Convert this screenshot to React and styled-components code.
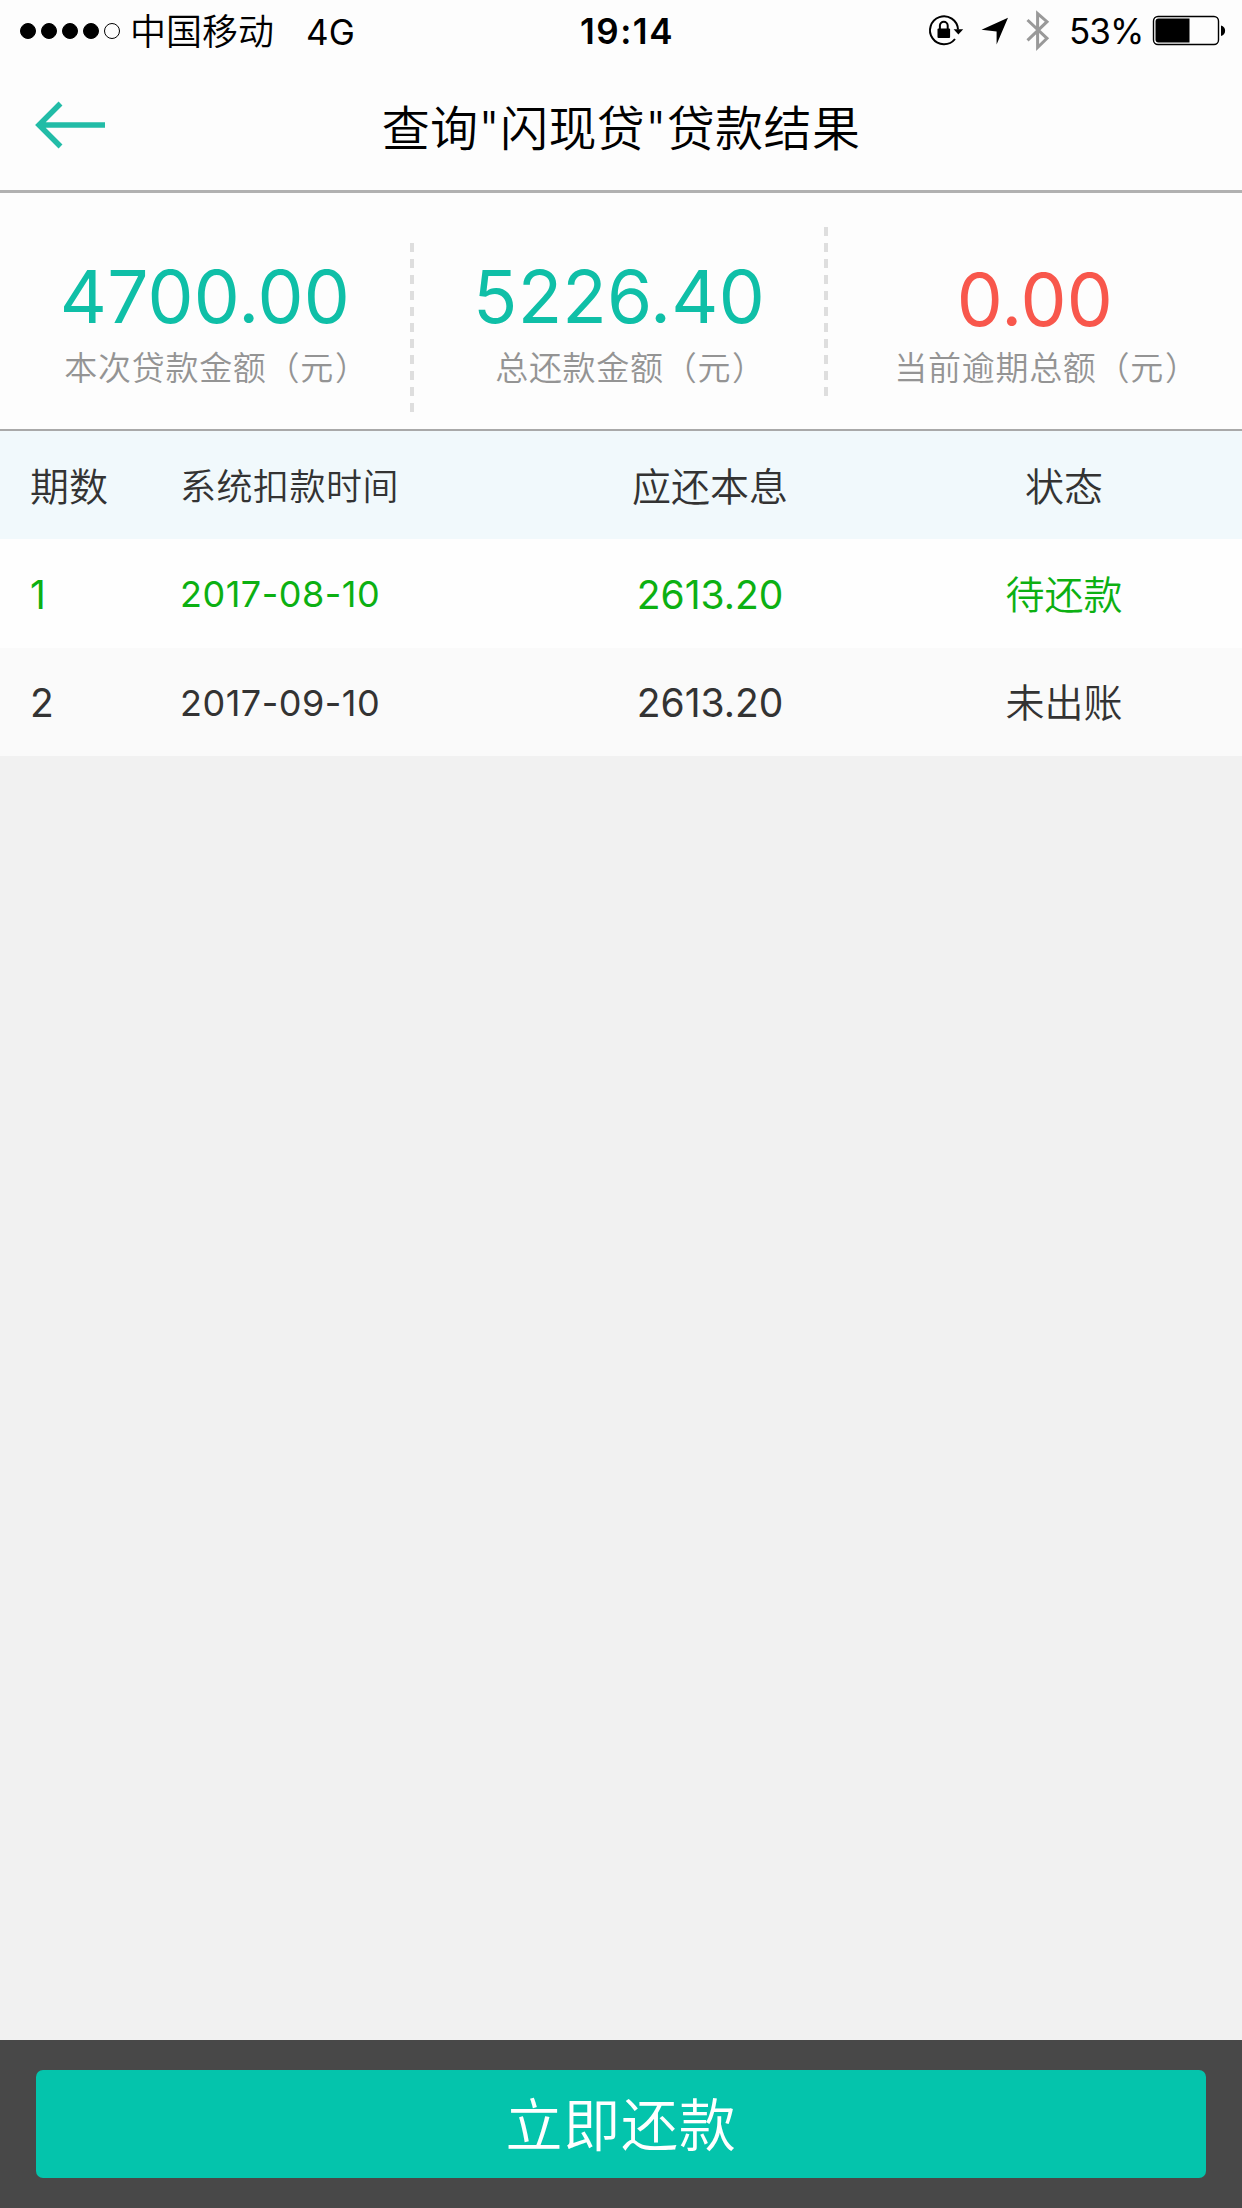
import React from 'react'
import styled, { createGlobalStyle } from 'styled-components';

const GlobalStyle = createGlobalStyle`
  body {
    margin: 0;
    background: #f1f1f1;
    font-family: Inter, "Noto Sans CJK SC", sans-serif;
  }
`;

const Page = styled.div`
  display: flex;
  flex-direction: column;
  width: 1242px;
  height: 2208px;
`;

const StatusBar = styled.div`
  display: grid;
  grid-template-columns: 580px 340px 1fr;
  height: 63px;
  background: #fdfdfd;
  color: #000;
  font-size: 35px;
  line-height: 63px;
  white-space: nowrap;
`;

const Carrier = styled.div`
  display: flex;
  align-items: center;
  padding-left: 20px;
`;

const Dots = styled.div`
  display: flex;
  gap: 5px;
  margin: 0 10px 3px 0;
`;

const Dot = styled.span`
  box-sizing: border-box;
  width: 16px;
  height: 16px;
  border: 1px solid #000;
  border-radius: 50%;
  background: ${props => props.$on ? '#000' : 'transparent'};
`;

const CarrierName = styled.span`
  font-size: 36px;
  font-weight: 350;
  line-height: 64px;
`;

const Network = styled.span`
  margin-left: 32px;
`;

const Clock = styled.div`
  font-size: 35px;
  font-weight: 600;
  letter-spacing: 1.5px;
`;

const StatusIcons = styled.div`
  display: flex;
  align-items: flex-start;
`;

const Percent = styled.span`
  width: 83px;
  letter-spacing: -1px;
`;

const NavBar = styled.div`
  display: grid;
  grid-template-columns: 141px 960px 141px;
  align-items: center;
  height: 127px;
  background: #fdfdfd;
  border-bottom: 3px solid #b1b1b1;
`;

const Back = styled.button`
  height: 127px;
  padding: 0;
  border: 0;
  background: none;
`;

const Title = styled.h1`
  height: 127px;
  margin: 0;
  color: #000;
  font-size: 48px;
  font-weight: 350;
  line-height: 132px;
  letter-spacing: 0.4px;
  text-align: center;
`;

const Summary = styled.div`
  display: grid;
  grid-template-columns: 410px 4px 410px 4px 414px;
  height: 236px;
  background: #fdfdfd;
  border-bottom: 2px solid #a9a9a9;
`;

const Divider = styled.div`
  width: 4px;
  height: 169px;
  margin-top: ${props => props.$top}px;
  background: repeating-linear-gradient(#dedede 0 9px, transparent 9px 16px);
`;

const SummaryItem = styled.div`
  display: flex;
  flex-direction: column;
  align-items: center;
  padding-top: ${props => props.$warn ? 67 : 64}px;
  white-space: nowrap;
`;

const Amount = styled.div`
  height: ${props => props.$warn ? 76 : 79}px;
  color: ${props => props.$warn ? '#f8574c' : '#0fbfa7'};
  font-size: 73px;
  line-height: 80px;
  letter-spacing: 0.2px;
`;

// the closing full-width bracket leaves half an em blank on its right
const Label = styled.div`
  padding-left: 23px;
  color: #949494;
  font-size: 33px;
  font-weight: 350;
  line-height: 64px;
  letter-spacing: 0.7px;
`;

const Bracket = styled.span`
  margin-left: 1px;
`;

const Row = styled.div`
  display: grid;
  grid-template-columns: 181px 353px 352px 356px;
  height: ${props => props.$height}px;
  background: ${props => props.$bg};
  color: ${props => props.$color};
  font-size: 39px;
  font-weight: ${props => props.$head ? 350 : 400};
  line-height: ${props => props.$height + (props.$head ? 4 : 2)}px;
  white-space: nowrap;
`;

const Term = styled.div`
  padding-left: 30px;
`;

const Day = styled.div`
  margin-left: -1px;
  font-size: 36px;
  letter-spacing: 0.5px;
`;

const Money = styled.div`
  text-align: center;
`;

const State = styled.div`
  font-weight: 350;
  text-align: center;
`;

const Footer = styled.div`
  height: 168px;
  margin-top: auto;
  background: #484848;
`;

const PayButton = styled.button`
  display: block;
  width: 1170px;
  height: 108px;
  margin: 30px auto 0;
  padding: 3px 0 0;
  border: 0;
  border-radius: 7px;
  background: #04c4ac;
  color: #fff;
  font-family: inherit;
  font-size: 57px;
  font-weight: 350;
  line-height: 105px;
  letter-spacing: 0.8px;
`;

const items = [
  { amount: '4700.00', label: '本次贷款金额（元' },
  { amount: '5226.40', label: '总还款金额（元' },
  { amount: '0.00', label: '当前逾期总额（元', warn: true },
];

const rows = [
  { term: '期数', day: '系统扣款时间', money: '应还本息', state: '状态', height: 108, bg: '#f1f9fc', color: '#333', head: true },
  { term: '1', day: '2017-08-10', money: '2613.20', state: '待还款', height: 109, bg: '#fefefe', color: '#0cb012' },
  { term: '2', day: '2017-09-10', money: '2613.20', state: '未出账', height: 108, bg: '#fafafa', color: '#333' },
];

// rotation lock, location and bluetooth
function SystemIcons() {
  return (
    <svg width="149" height="62" viewBox="920 0 149 62" fill="none">
      <path d="M958 29.5A14 14 0 1 0 955 39" stroke="#000" strokeWidth="2" />
      <path d="M953.6 29.2h9.6l-4.8 5.2z" fill="#000" />
      <rect x="937.5" y="28.5" width="12.6" height="9.5" rx="1" fill="#000" />
      <path d="M939.9 29v-3.4a3.9 3.9 0 0 1 7.8 0V29" stroke="#000" strokeWidth="2" />
      <path d="M1008 17.8L996.6 44.5V31.4L981.5 29.8z" fill="#000" />
      <path d="M1027.5 20l19.5 18.3-9.4 9.2V13.5l9.4 8.2-19.5 18.6" stroke="#999" strokeWidth="3" />
    </svg>
  )
}

function Battery() {
  return (
    <svg width="75" height="62" viewBox="1152 0 75 62" fill="none">
      <rect x="1153.5" y="16.5" width="65" height="28" rx="4.5" stroke="#000" strokeWidth="1.4" />
      <path d="M1189.5 18.5v24h-31a3 3 0 0 1-3-3v-18a3 3 0 0 1 3-3z" fill="#000" />
      <path d="M1221 25.6c5.5 1 5.5 9.5 0 10.5z" fill="#000" />
    </svg>
  )
}

function App() {
  return (
    <Page>
      <GlobalStyle />
      <StatusBar>
        <Carrier>
          <Dots>
            {[1, 2, 3, 4, 5].map(n => <Dot key={n} $on={n < 5} />)}
          </Dots>
          <CarrierName>中国移动</CarrierName>
          <Network>4G</Network>
        </Carrier>
        <Clock>19:14</Clock>
        <StatusIcons>
          <SystemIcons />
          <Percent>53%</Percent>
          <Battery />
        </StatusIcons>
      </StatusBar>
      <NavBar>
        <Back>
          <svg width="141" height="127" viewBox="0 63 141 127" fill="none" stroke="#22bca7" strokeWidth="5.5">
            <path d="M105 125H39M60.5 103.5L39 125l21.5 21.5" />
          </svg>
        </Back>
        <Title>查询"闪现贷"贷款结果</Title>
      </NavBar>
      <Summary>
        {items.map((item, i) => (
          <React.Fragment key={item.label}>
            {i > 0 && <Divider $top={i === 1 ? 50 : 34} />}
            <SummaryItem $warn={item.warn}>
              <Amount $warn={item.warn}>{item.amount}</Amount>
              <Label>{item.label}<Bracket>）</Bracket></Label>
            </SummaryItem>
          </React.Fragment>
        ))}
      </Summary>
      {rows.map(row => (
        <Row key={row.term} $head={row.head} $height={row.height} $bg={row.bg} $color={row.color}>
          <Term>{row.term}</Term>
          <Day>{row.day}</Day>
          <Money>{row.money}</Money>
          <State>{row.state}</State>
        </Row>
      ))}
      <Footer>
        <PayButton type="button">立即还款</PayButton>
      </Footer>
    </Page>
  )
}

export default App;
